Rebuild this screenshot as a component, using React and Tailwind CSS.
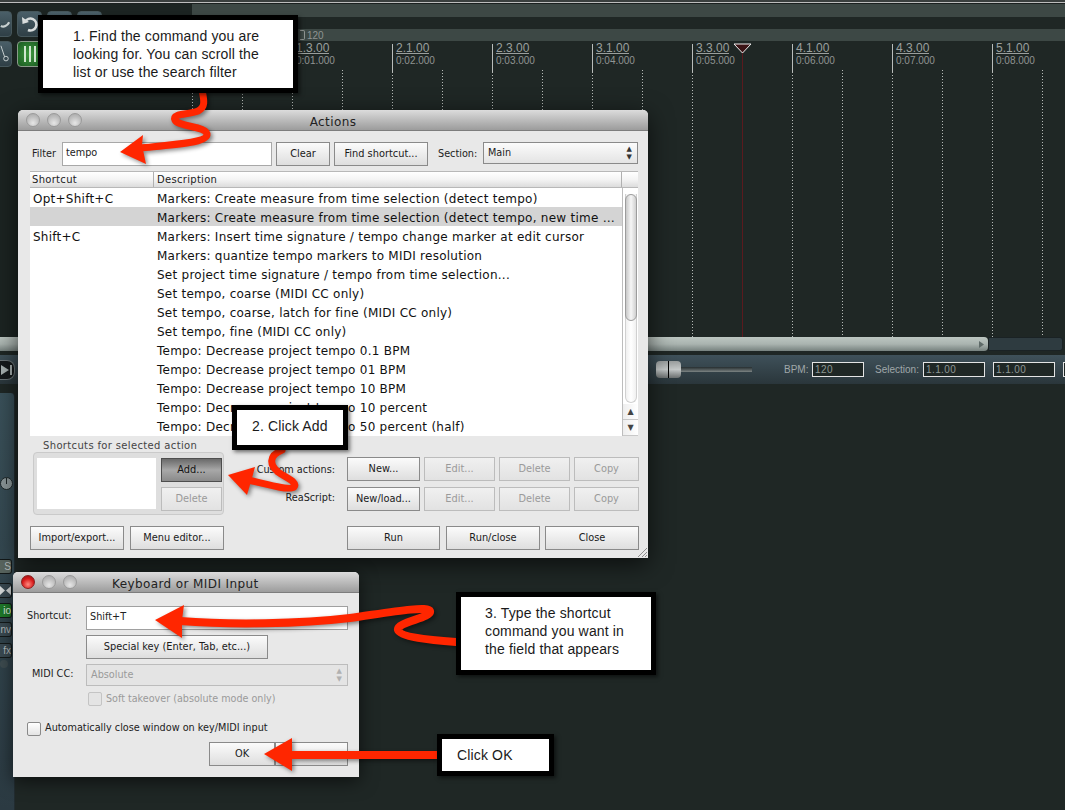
import React from 'react'

const ui = { fontFamily: '"DejaVu Sans", sans-serif' }

const ticks = [
  ['', ''], null, ['1.3.00', '0:01.000'], null, ['2.1.00', '0:02.000'], null,
  ['2.3.00', '0:03.000'], null, ['3.1.00', '0:04.000'], null, ['3.3.00', '0:05.000'], 'playhead',
  ['4.1.00', '0:06.000'], null, ['4.3.00', '0:07.000'], null, ['5.1.00', '0:08.000'], null,
]

const rows = [
  ['Opt+Shift+C', 'Markers: Create measure from time selection (detect tempo)'],
  ['', 'Markers: Create measure from time selection (detect tempo, new time …', true],
  ['Shift+C', 'Markers: Insert time signature / tempo change marker at edit cursor'],
  ['', 'Markers: quantize tempo markers to MIDI resolution'],
  ['', 'Set project time signature / tempo from time selection...'],
  ['', 'Set tempo, coarse (MIDI CC only)'],
  ['', 'Set tempo, coarse, latch for fine (MIDI CC only)'],
  ['', 'Set tempo, fine (MIDI CC only)'],
  ['', 'Tempo: Decrease project tempo 0.1 BPM'],
  ['', 'Tempo: Decrease project tempo 01 BPM'],
  ['', 'Tempo: Decrease project tempo 10 BPM'],
  ['', 'Tempo: Decrease project tempo 10 percent'],
  ['', 'Tempo: Decrease project tempo 50 percent (half)'],
]

function Tick({ label, minor, playhead }) {
  const dots = 'bg-[repeating-linear-gradient(to_bottom,#b4b9b6_0,#b4b9b6_1px,transparent_1px,transparent_3px)]'
  return (
    <div className="relative w-[50px] h-full flex flex-col shrink-0">
      {playhead && (
        <svg className="absolute left-[-9px] top-[-1px]" width="19" height="11" viewBox="0 0 19 11">
          <path d="M1 1 L18 1 L9.5 10 Z" fill="#3c1416" stroke="#eee" strokeWidth="1" />
        </svg>
      )}
      {minor ? (
        <div className="h-[26px]" />
      ) : (
        <div className="h-[28px] border-l border-[#b9bdbb] pl-[3px] text-[#9a9f9d]">
          {label[0] && (
            <>
              <div className="w-fit text-[12px] leading-[7px] pt-[1px] pb-[1px] border-b border-[#9a9f9d]">{label[0]}</div>
              <div className="text-[10px] leading-[12px] mt-[1px] text-[#8f9492]">{label[1]}</div>
            </>
          )}
        </div>
      )}
      {playhead ? (
        <div className="w-px flex-1 mt-[-18px] bg-[#5a1a1e]" />
      ) : (
        <div className={`w-px flex-1 ${dots}`} />
      )}
    </div>
  )
}

function ToolBtn({ className = '', skin = 'border-[#46575c] bg-gradient-to-b from-[#4a5f68] to-[#2f3f46]', children }) {
  return (
    <div className={`flex items-center justify-center shrink-0 h-[26px] rounded-[4px] border ${skin} ${className}`}>
      {children}
    </div>
  )
}

function StripBtn({ className = '', children }) {
  return (
    <div className={`w-[12px] h-[15px] flex items-center justify-end overflow-hidden rounded-r-[3px] border border-l-0 border-[#141a1a] text-[10px] text-[#b5bcbc] ${className}`} style={{ fontFamily: '"Liberation Sans", sans-serif' }}>
      {children}
    </div>
  )
}

function Btn({ className = '', disabled, dark, children }) {
  const skin = dark
    ? 'border-[#4d4d4d] bg-gradient-to-b from-[#6a6a6a] via-[#a8a8a8] to-[#8a8a8a] text-[#111]'
    : disabled
      ? 'border-[#bcbcbc] bg-gradient-to-b from-[#f0f0f0] to-[#e2e2e2] text-[#9a9a9a]'
      : 'border-[#8a8a8a] bg-gradient-to-b from-[#fbfbfb] to-[#dedede] text-[#1a1a1a]'
  return (
    <div className={`h-[24px] shrink-0 flex items-center justify-center pt-[1px] border text-[9.8px] ${skin} ${className}`}>
      {children}
    </div>
  )
}

function Light({ red }) {
  return red ? (
    <div className="w-[14px] h-[14px] rounded-full border border-[#8a2020] bg-[radial-gradient(circle_at_50%_70%,#ff8a80,#d81b1b_55%,#8f1010)]" />
  ) : (
    <div className="w-[14px] h-[14px] rounded-full border border-[#9a9a9a] bg-[radial-gradient(circle_at_50%_75%,#e6e6e6,#bcbcbc_60%,#a6a6a6)]" />
  )
}

function TitleBar({ title, red, center }) {
  return (
    <div className={`relative h-[21px] shrink-0 flex items-center pt-[3px] rounded-t-[5px] bg-gradient-to-b from-[#dcdcdc] to-[#9c9c9c] border-b border-[#7d7d7d] ${center}`}>
      <div className="absolute left-[8px] top-[3px] flex gap-[7px]">
        <Light red={red} />
        <Light />
        <Light />
      </div>
      <div className="text-[12px] tracking-[0.4px] text-[#222]">{title}</div>
    </div>
  )
}

function Spinner({ dim }) {
  return (
    <div className={`flex flex-col items-center text-[7px] leading-[8px] ${dim ? 'text-[#b0b0b0]' : 'text-[#333]'}`}>
      <span>▲</span>
      <span>▼</span>
    </div>
  )
}

function Callout({ className, children }) {
  return (
    <div className={`absolute border-[5px] border-black bg-white text-[14px] leading-[18px] tracking-[0.15px] text-[#1a1a1a] shadow-[2px_2px_4px_rgba(0,0,0,0.55)] ${className}`} style={{ fontFamily: '"Liberation Sans", sans-serif' }}>
      {children}
    </div>
  )
}

function Field({ className = '', children }) {
  return (
    <div className={`h-[15px] shrink-0 border border-[#e4e4e4] bg-[#1f2725] pl-[2px] text-[10px] leading-[13px] tracking-[0.4px] text-[#8d9794] ${className}`}>
      {children}
    </div>
  )
}

function ActionsWindow() {
  return (
    <div className="absolute left-[18px] top-[110px] w-[630px] h-[448px] flex flex-col rounded-t-[5px] bg-[#e8e8e8] shadow-[0_6px_24px_rgba(0,0,0,0.65)]" style={ui}>
      <TitleBar title="Actions" center="justify-center" />
      <div className="relative flex-1 pl-[12px] pr-[9px] pt-[11px] text-[#222]">
        {/* filter row */}
        <div className="flex items-start h-[24px]">
          <div className="w-[32px] pl-[2px] text-[9.7px] leading-[24px]">Filter</div>
          <div className="w-[210px] h-[24px] border border-[#a8a8a8] bg-white pl-[3px] text-[9.7px] leading-[20px]">tempo</div>
          <Btn className="w-[54px] ml-[4px]">Clear</Btn>
          <Btn className="w-[94px] ml-[4px]">Find shortcut...</Btn>
          <div className="ml-[10px] w-[45px] text-[9.7px] leading-[24px]">Section:</div>
          <div className="w-[155px] h-[22px] flex items-center justify-between border border-[#8a8a8a] bg-gradient-to-b from-[#fbfbfb] to-[#e4e4e4] pl-[4px] pr-[5px] text-[9.7px]">
            <span className="pt-[1px]">Main</span>
            <Spinner />
          </div>
        </div>

        {/* list header */}
        <div className="flex h-[17px] w-[608px] mt-[5px] border-t border-b border-[#b8b8b8] bg-gradient-to-b from-[#ffffff] via-[#f4f4f4] to-[#dcdcdc] text-[10px] leading-[15px] tracking-[0.3px]">
          <div className="w-[124px] pl-[2px] border-r border-[#b0b0b0]">Shortcut</div>
          <div className="w-[468px] pl-[3px] border-r border-[#b0b0b0]">Description</div>
        </div>

        {/* list and scrollbar */}
        <div className="flex w-[608px] h-[248px]">
          <div className="w-[592px] bg-white">
            {rows.map(([key, desc, selected]) => (
              <div key={desc} className={`flex h-[19px] pt-[2px] items-center text-[12px] tracking-[0.25px] text-[#111] whitespace-nowrap ${selected ? 'bg-[#d4d4d4]' : ''}`}>
                <div className="w-[127px] pl-[3px]">{key}</div>
                <div>{desc}</div>
              </div>
            ))}
          </div>
          <div className="w-[16px] flex flex-col items-center border-l border-[#bdbdbd] bg-white">
            <div className="w-[12px] h-[215px] mt-[6px] rounded-b-[6px] border border-t-0 border-[#d0d0d0] bg-gradient-to-r from-[#f0f0f0] via-white to-[#f0f0f0]">
              <div className="h-[127px] -mx-px rounded-[6px] border border-[#9c9c9c] bg-gradient-to-r from-[#c8c8c8] via-[#f6f6f6] to-[#cfcfcf]" />
            </div>
            <div className="w-full mt-[1px] flex-1 flex flex-col text-[8px] text-[#444] text-center bg-gradient-to-r from-[#eeeeee] to-white">
              <div className="h-[16px] leading-[16px] border-b border-[#c8c8c8]">▲</div>
              <div className="h-[16px] leading-[16px] border-b border-[#c8c8c8]">▼</div>
            </div>
          </div>
        </div>

        {/* shortcuts and action buttons */}
        <div className="flex">
          <div className="w-[194px] shrink-0 pl-[3px]">
            <div className="h-[16px] pl-[10px] text-[10px] leading-[20px] tracking-[0.35px] text-[#444]">Shortcuts for selected action</div>
            <div className="flex w-[191px] h-[63px] rounded-[4px] border border-[#cacaca] bg-[#dedede] pl-[3px] pt-[5px] gap-[5px]">
              <div className="w-[119px] h-[51px] bg-white" />
              <div className="flex flex-col gap-[5px]">
                <Btn dark className="w-[61px]">Add...</Btn>
                <Btn disabled className="w-[61px]">Delete</Btn>
              </div>
            </div>
          </div>
          <div className="flex flex-col gap-[5px] pt-[21px]">
            <div className="flex">
              <div className="w-[112px] pr-[1px] text-right text-[9.7px] leading-[25px]">Custom actions:</div>
              <Btn className="w-[73px] ml-[11px]">New...</Btn>
              <Btn disabled className="w-[71px] ml-[4px]">Edit...</Btn>
              <Btn disabled className="w-[71px] ml-[4px]">Delete</Btn>
              <Btn disabled className="w-[65px] ml-[4px]">Copy</Btn>
            </div>
            <div className="flex">
              <div className="w-[112px] pr-[1px] text-right text-[9.7px] leading-[22px]">ReaScript:</div>
              <Btn className="w-[73px] ml-[11px]">New/load...</Btn>
              <Btn disabled className="w-[71px] ml-[4px]">Edit...</Btn>
              <Btn disabled className="w-[71px] ml-[4px]">Delete</Btn>
              <Btn disabled className="w-[65px] ml-[4px]">Copy</Btn>
            </div>
          </div>
        </div>

        {/* bottom row */}
        <div className="flex mt-[11px]">
          <Btn className="w-[94px]">Import/export...</Btn>
          <Btn className="w-[94px] ml-[6px]">Menu editor...</Btn>
          <Btn className="w-[93px] ml-[123px]">Run</Btn>
          <Btn className="w-[94px] ml-[6px]">Run/close</Btn>
          <Btn className="w-[94px] ml-[5px]">Close</Btn>
        </div>

        {/* resize grip */}
        <svg className="absolute right-0 bottom-0" width="12" height="12" viewBox="0 0 12 12">
          <path d="M11 2 L2 11 M11 6 L6 11 M11 9 L9 11" stroke="#8f8f8f" strokeWidth="1" />
        </svg>
      </div>
    </div>
  )
}

function KeyboardWindow() {
  return (
    <div className="absolute left-[13px] top-[572px] w-[346px] h-[205px] flex flex-col rounded-t-[5px] bg-[#e8e8e8] shadow-[0_4px_18px_rgba(0,0,0,0.6)]" style={ui}>
      <TitleBar title="Keyboard or MIDI Input" red center="pl-[99px]" />
      <div className="pt-[13px] text-[#222]">
        <div className="flex">
          <div className="w-[73px] pl-[14px] text-[9.7px] leading-[19px]">Shortcut:</div>
          <div className="w-[262px] h-[24px] border border-[#a0a0a0] bg-white pl-[3px] text-[9.7px] leading-[19px]">Shift+T</div>
        </div>
        <Btn className="w-[182px] ml-[73px] mt-[5px]">Special key (Enter, Tab, etc...)</Btn>
        <div className="flex mt-[5px]">
          <div className="w-[73px] pl-[19px] text-[9.7px] leading-[20px]">MIDI CC:</div>
          <div className="w-[262px] h-[22px] flex items-center justify-between border border-[#bcbcbc] bg-[#e4e4e4] pl-[4px] pr-[5px] text-[9.7px] text-[#9a9a9a]">
            <span className="pt-[1px]">Absolute</span>
            <Spinner dim />
          </div>
        </div>
        <div className="flex items-center h-[15px] mt-[5px] ml-[75px] gap-[4px] text-[9.6px] text-[#9a9a9a]">
          <div className="w-[14px] h-[14px] rounded-[2px] border border-[#c4c4c4] bg-[#e4e4e4]" />
          <span className="pt-[1px]">Soft takeover (absolute mode only)</span>
        </div>
        <div className="flex items-start h-[14px] mt-[16px] ml-[14px] gap-[4px] text-[9.7px] leading-[11px]">
          <div className="w-[14px] h-[14px] rounded-[2px] border border-[#8a8a8a] bg-gradient-to-b from-white to-[#e4e4e4]" />
          Automatically close window on key/MIDI input
        </div>
        <div className="flex mt-[6px] ml-[196px]">
          <Btn className="w-[66px]">OK</Btn>
          <Btn className="w-[73px]" />
        </div>
      </div>
    </div>
  )
}

export default function App() {
  return (
    <div className="relative w-[1065px] h-[810px] overflow-hidden bg-[#1f2725] flex flex-col">
      {/* top edge */}
      <div className="h-[2px] shrink-0 bg-[#3a3f3e]" />
      <div className="h-px shrink-0 bg-[#bdbdbd]" />
      <div className="h-px shrink-0 bg-[#1a201f]" />

      {/* toolbar and ruler */}
      <div className="h-[333px] shrink-0 flex">
        <div className="w-[192px] shrink-0 pt-[7px] bg-[#1c2422]">
          <div className="flex gap-[5px]">
            <ToolBtn className="w-[25px] ml-[-13px]">
              <svg className="ml-[12px]" width="12" height="14" viewBox="0 0 12 14" fill="none" stroke="#c8d0d0" strokeWidth="2.4">
                <path d="M1 9 C4 11 8 9 10 5" />
              </svg>
            </ToolBtn>
            <ToolBtn className="w-[25px]">
              <svg width="20" height="20" viewBox="0 0 20 20" fill="none" stroke="#d8dcdc" strokeWidth="2.6">
                <path d="M5 8 A6 6 0 1 1 8 16" />
                <path d="M2 3 L2.5 10 L9 8" fill="#d8dcdc" stroke="none" />
              </svg>
            </ToolBtn>
            <ToolBtn className="w-[25px]" />
            <ToolBtn className="w-[25px]" />
          </div>
          <div className="flex gap-[5px] mt-[4px]">
            <ToolBtn className="w-[25px] ml-[-13px]">
              <svg className="ml-[12px]" width="12" height="22" viewBox="0 0 12 22" fill="none" stroke="#d0d6d6" strokeWidth="1">
                <path d="M1 2 L5 14" />
                <circle cx="6.5" cy="16" r="2.5" />
              </svg>
            </ToolBtn>
            <ToolBtn className="w-[25px]" skin="border-[#8a9a8a] bg-[radial-gradient(circle,#3f9a3f,#1a5a22)]">
              <div className="flex gap-[3px]">
                <div className="w-[2px] h-[16px] bg-[#cfe6cf]" />
                <div className="w-[2px] h-[16px] bg-[#cfe6cf]" />
                <div className="w-[2px] h-[16px] bg-[#cfe6cf]" />
              </div>
            </ToolBtn>
          </div>
        </div>

        <div className="flex-1 flex flex-col" style={{ fontFamily: '"Liberation Sans", sans-serif' }}>
          <div className="h-[13px] shrink-0 bg-[#3d4845]" />
          <div className="h-[12px] shrink-0" />
          <div className="h-[12px] shrink-0 bg-[#3d4845] pl-[108px] flex items-center gap-[2px] text-[10px] text-[#8f9492]">
            <div className="w-[5px] h-[10px] rounded-r-[2px] border border-l-0 border-[#8f9492]" />
            120
          </div>
          <div className="h-[3px] shrink-0" />
          <div className="flex-1 flex">
            {ticks.map((t, i) =>
              t === 'playhead' ? <Tick key={i} minor playhead /> : t ? <Tick key={i} label={t} /> : <Tick key={i} minor />
            )}
          </div>
        </div>
      </div>

      {/* horizontal scrollbar */}
      <div className="h-[14px] shrink-0 flex">
        <div className="w-[988px] flex items-center justify-end pr-[4px] rounded-r-[4px] bg-gradient-to-b from-[#bcc6c1] via-[#aab4b0] to-[#77827f]">
          <svg width="5" height="7" viewBox="0 0 5 7"><path d="M0 0 L5 3.5 L0 7 Z" fill="#5e6a68" /></svg>
        </div>
        <div className="w-[75px] rounded-r-[3px] border border-[#1a2224] bg-[#2e3b40]" />
      </div>
      <div className="h-[4px] shrink-0" />

      {/* transport */}
      <div className="h-[29px] shrink-0 flex items-center bg-gradient-to-b from-[#3f515a] to-[#2a363b]" style={{ fontFamily: '"Liberation Sans", sans-serif' }}>
        <div className="w-[15px] h-[20px] shrink-0 flex items-center justify-end pr-[1px] rounded-r-[8px] border border-l-0 border-[#6a7478] bg-[#14191b]">
          <svg width="12" height="10" viewBox="0 0 12 10"><path d="M0 0 L8 5 L0 10 Z M9 0 H11 V10 H9 Z" fill="#a6b0b0" /></svg>
        </div>
        <div className="w-[641px] shrink-0" />
        <div className="relative w-[25px] h-[17px] shrink-0 flex justify-center rounded-[4px] bg-gradient-to-b from-[#9a9e9e] via-[#c4c8c8] to-[#6c7070]">
          <div className="w-px h-full bg-black" />
        </div>
        <div className="w-[71px] h-[5px] shrink-0 bg-gradient-to-b from-[#262e30] to-[#7c8484]" />
        <div className="ml-[32px] w-[28px] shrink-0 text-[10px] text-[#a0a8aa]">BPM:</div>
        <Field className="w-[52px]">120</Field>
        <div className="ml-[11px] w-[48px] shrink-0 text-[10px] text-[#a0a8aa]">Selection:</div>
        <Field className="w-[62px]">1.1.00</Field>
        <Field className="w-[62px] ml-[8px]">1.1.00</Field>
        <Field className="w-[62px] ml-[8px]" />
      </div>

      {/* track panel strip */}
      <div className="flex-1 pt-[9px]">
        <div className="w-[15px] h-full flex flex-col rounded-tr-[4px] bg-gradient-to-b from-[#3a515a] to-[#2b3a42] border-r border-[#222c30]">
          <div className="h-[84px]" />
          <div className="w-[13px] h-[13px] rounded-full border border-[#1d2628] bg-[#8a9698] flex justify-center">
            <div className="w-px h-[6px] bg-[#1d2628]" />
          </div>
          <div className="h-[69px]" />
          <StripBtn className="bg-[#5a6660]">S</StripBtn>
          <StripBtn className="mt-[9px] bg-[#3a4a52]">
            <svg width="11" height="9" viewBox="0 0 11 9"><path d="M0 0 L5 4.5 L0 9 Z M11 0 L6 4.5 L11 9 Z" fill="#d8dcdc" /></svg>
          </StripBtn>
          <StripBtn className="mt-[5px] bg-[#1f7a2a] text-[#e0f0e0]">io</StripBtn>
          <StripBtn className="mt-[4px] bg-[#3a4a52]">nv</StripBtn>
          <StripBtn className="mt-[6px] bg-[#3a4a52]">fx</StripBtn>
          <div className="w-[8px] h-[8px] mt-[2px] rounded-full bg-[#3e4c50]" />
        </div>
      </div>

      <ActionsWindow />
      <KeyboardWindow />

      {/* red arrows */}
      <svg className="absolute inset-0 drop-shadow-[2px_2px_2px_rgba(0,0,0,0.45)]" width="1065" height="810" viewBox="0 0 1065 810" fill="none" stroke="#ff2600" strokeLinecap="round">
        <path strokeWidth="7" d="M202 90 C204 100 206 107 198 111 C188 115 172 113 175 120 C178 127 208 126 207 135 C206 143 170 145 140 148" />
        <path fill="#ff2600" stroke="none" d="M120 152 L143 135 L142 145 L146 164 Z" />
        <path strokeWidth="7" d="M282 450 C268 456 270 465 278 472 C286 478 298 482 294 487 C290 491 265 484 248 480" />
        <path fill="#ff2600" stroke="none" d="M228 475 L255 467 L252 478 L247 495 Z" />
        <path strokeWidth="8" d="M456 642 C430 640 400 637 398 630 C396 622 432 618 430 611 C428 605 380 614 350 618 C300 624 230 625 180 621" />
        <path fill="#ff2600" stroke="none" d="M155 620 L184 605 L182 620 L182 638 Z" />
        <path strokeWidth="8" strokeLinecap="butt" d="M437 755 L285 755" />
        <path fill="#ff2600" stroke="none" d="M264 754 L292 738 L292 771 Z" />
      </svg>

      {/* annotations */}
      <Callout className="left-[38px] top-[15px] w-[260px] h-[78px] pl-[30px] pt-[7px]">
        <div>1. Find the command you are</div>
        <div>looking for. You can scroll the</div>
        <div>list or use the search filter</div>
      </Callout>
      <Callout className="left-[232px] top-[405px] w-[116px] h-[45px] pl-[15px] pt-[7px]">2. Click Add</Callout>
      <Callout className="left-[456px] top-[592px] w-[200px] h-[83px] pl-[24px] pt-[7px]">
        <div>3. Type the shortcut</div>
        <div>command you want in</div>
        <div>the field that appears</div>
      </Callout>
      <Callout className="left-[437px] top-[734px] w-[117px] h-[42px] pl-[15px] pt-[7px]">Click OK</Callout>
    </div>
  )
}
